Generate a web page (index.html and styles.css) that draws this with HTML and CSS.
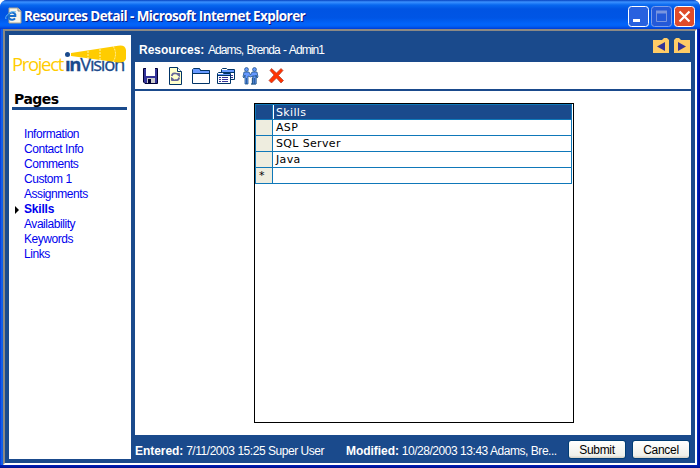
FILE: index.html
```html
<!DOCTYPE html>
<html lang="en">
<head>
<meta charset="utf-8">
<title>Resources Detail</title>
<link rel="stylesheet" href="styles.css">
</head>
<body>
<div class="window">
  <header class="titlebar">
    <svg class="page-icon" width="17" height="17" viewBox="0 0 17 17"><path d="M4 1h9l3 3v12H4z" fill="#f7f5ea" stroke="#aaa58f"/><path d="M13 1v3h3" fill="#ddd" stroke="#888"/><path d="M10 11.3A3.6 3.6 0 1 1 10.3 7.500L10.300 9H4" fill="none" stroke="#176dcc" stroke-width="2"/><path d="M1 12C-1 9 7 3 11 5" fill="none" stroke="#60b8f4"/></svg>
    <h1>Resources Detail - Microsoft Internet Explorer</h1>
    <div class="controls">
      <svg class="ctl" width="21" height="21" viewBox="0 0 21 21"><rect x=".5" y=".5" width="20" height="20" rx="3" fill="#2861df" stroke="#fff"/><rect x="5" y="13" width="7" height="3" fill="#fff"/></svg>
      <svg class="ctl" width="21" height="21" viewBox="0 0 21 21"><rect x=".5" y=".5" width="20" height="20" rx="3" fill="#2459d8" stroke="#7e9fe9"/><path d="M5.500 6v9.500h10V6" fill="none" stroke="#7995df"/><path d="M5 6h11" stroke="#7995df" stroke-width="3"/></svg>
      <svg class="ctl" width="21" height="21" viewBox="0 0 21 21"><rect x=".5" y=".5" width="20" height="20" rx="3" fill="#df4c29" stroke="#fff"/><path d="M5.500 5.500l10 10m0-10l-10 10" stroke="#fff" stroke-width="2.200"/></svg>
    </div>
  </header>
  <div class="frame">
    <aside class="sidebar">
      <div class="logo">
        <svg class="beam" width="117" height="20" viewBox="0 0 117 20">
          <path d="M59 8L106 .8Q113 -.5 114 5V14Q112 19 103 17L59 11z" fill="#fc0"/>
          <path d="M76 6v7M88 4v11M101 1q5 8 0 16" fill="none" stroke="#fff3b0" stroke-dasharray="2 1"/>
          <circle cx="55.500" cy="9.500" r="2.500" fill="#1a4a8c"/>
        </svg>
        <div class="wordmark"><span class="project">Project</span><span class="in"><b>ın</b>Vısıon</span></div>
      </div>
      <h2>Pages</h2>
      <nav>
        <a>Information</a>
        <a>Contact Info</a>
        <a>Comments</a>
        <a>Custom 1</a>
        <a>Assignments</a>
        <a class="current">Skills</a>
        <a>Availability</a>
        <a>Keywords</a>
        <a>Links</a>
      </nav>
    </aside>
    <main>
      <div class="record">
        <b>Resources:</b><span class="name">Adams, Brenda - Admin1</span>
        <div class="pager">
          <svg width="16" height="15" viewBox="0 0 16 15"><path d="M0 2h9l2-2h3l2 2v13H0z" fill="#fc6"/><path d="M12 4v9L4 8.500z" fill="#339"/></svg>
          <svg width="16" height="15" viewBox="0 0 16 15"><path d="M0 2l2-2h3l2 2h9v13H0z" fill="#fc6"/><path d="M4 4v9l8-4.500z" fill="#339"/></svg>
        </div>
      </div>
      <div class="toolbar">
        <svg width="18" height="18" viewBox="0 0 18 18"><path d="M1.500 1.500h14v15H3l-1.500-1.500z" fill="#339" stroke="#003"/><path d="M4 1h9v8H4z" fill="#fff"/><path d="M5 11h8v5H5z" fill="#ccc"/><path d="M6 12h3v4H6z" fill="#003"/></svg>
        <svg width="18" height="18" viewBox="0 0 18 18"><path d="M2.500.5h8l4 4v13h-12z" fill="#ffffcc" stroke="#036"/><path d="M10.500.5v4h4" fill="#fff" stroke="#036"/><path d="M4.800 9q.5-3.500 4.500-2.500M12.200 10.500q-.5 3.500-4.500 2.500" fill="none" stroke="#669" stroke-width="1.800"/><path d="M9 6.500h3.500V9.500zM8 13.500H4.500v-3z" fill="#669" stroke="#669"/></svg>
        <svg width="18" height="18" viewBox="0 0 18 18"><path d="M.5 16.500V2.500l1-1h6l1 2h9v13z" fill="#fff" stroke="#036"/><path d="M1 4h16v2H1zM1 2h7v2H1z" fill="#69f"/><path d="M1 6.500h16M7.500 1.500l1 2h9" fill="none" stroke="#036"/></svg>
        <svg width="18" height="18" viewBox="0 0 18 18"><path d="M4.500 12V2.500l1-1h4l1 1h7v10h-4" fill="#fff" stroke="#036"/><path d="M5 3h12v2H5z" fill="#69f"/><path d="M5 5.500h12" stroke="#036"/><path d="M.5 16.500v-10l1-1h4l1 1h7v10z" fill="#fff" stroke="#036"/><path d="M1 7h12v1H1z" fill="#69f"/><path d="M1 8.500h12" stroke="#036"/><path d="M2 10.500h2m1 0h6M2 12.500h2m1 0h6M2 14.500h2m1 0h6M14 8.500h2M14 10.500h2" stroke="#339"/></svg>
        <svg width="18" height="18" viewBox="0 0 18 18"><g fill="#69f" stroke="#258" stroke-width=".8"><circle cx="4.500" cy="2.500" r="1.900"/><circle cx="12.500" cy="2.500" r="1.900"/><path d="M2 5h5l1.500 3L10 5h5l1 5-1 1-1-3v9h-5 1.700v-6h-.4v6H11V9l-2.500 1L6 9v8H3V8l-1 3-1-1z"/><path d="M11 9h3v8h-3z"/><path d="M4.500 11v6M12.500 11v6"/></g></svg>
        <svg width="18" height="18" viewBox="0 0 18 18"><path d="M4.500 1.500L9.500 6 14 1.500l2 2-4.500 5 5 5-2.500 2.500-4.500-5-5 5L2 13.500l5-5.500L3 3.500z" fill="#f30" stroke="#a43" stroke-width=".7"/></svg>
      </div>
      <div class="canvas">
        <div class="gridbox">
          <table>
            <tr class="head"><th></th><th>Skills</th></tr>
            <tr><th></th><td>ASP</td></tr>
            <tr><th></th><td>SQL Server</td></tr>
            <tr><th></th><td>Java</td></tr>
            <tr><th>*</th><td></td></tr>
          </table>
        </div>
      </div>
      <footer>
        <div class="entered"><b>Entered:</b> <span>7/11/2003 15:25 Super User</span></div>
        <div class="modified"><b>Modified:</b> <span>10/28/2003 13:43 Adams, Bre...</span></div>
        <button>Submit</button>
        <button>Cancel</button>
      </footer>
    </main>
  </div>
</div>
</body>
</html>
```
FILE: styles.css
```css
* { box-sizing: border-box; }
body { margin: 0; background: #fff; font-family: "Liberation Sans", Arial, sans-serif; font-size: 12px; overflow: hidden; }
.window { width: 700px; height: 468px; display: flex; flex-direction: column; padding: 0 3px 3px; border-radius: 7px 7px 0 0; background: linear-gradient(#0000, #0000 465px, #0020b8 465px, #00108c), linear-gradient(90deg, #0831d9, #166aee 2px, #0855dd 3px, #0030c8 697px, #00109c 699px); }
.titlebar { height: 29px; flex: none; margin: 0 -3px; padding: 0 5px; display: flex; align-items: center; border-radius: 7px 7px 0 0; background: linear-gradient(#0542c0 0, #3b91ff 2px, #0868ef 5px, #0054e3 9px, #0055e5 18px, #0264fb 24px, #0261f5 26px, #003dd7 29px); }
.page-icon { margin-top: 2px; }
h1 { margin: 3px 0 0 2px; font: bold 13.5px "Open Sans", sans-serif; letter-spacing: -.58px; color: #fff; text-shadow: 1px 1px #0a1883; white-space: nowrap; }
.controls { display: flex; gap: 2px; margin: 3px 0 0 auto; }
.frame { flex: 1; display: flex; min-height: 0; background: #1a4a8c; border: solid; border-width: 2px; border-color: #8c8984 #fff #fff #8c8984; padding: 4px 4px 0 4px; }
.sidebar { width: 122px; height: 424px; background: #fff; padding-left: 3px; }
.logo { position: relative; height: 46px; margin-top: 10px; }
.beam { position: absolute; left: 0; top: 0; }
.wordmark { padding-top: 6px; font: 18.500px/26px "Open Sans", sans-serif; white-space: nowrap; }
.project { display: inline-block; width: 53px; letter-spacing: -1.35px; color: #fc0; }
.in { letter-spacing: -1.3px; color: #1a4a8c; -webkit-text-stroke: .3px #1a4a8c; }
h2 { width: 115px; height: 19px; margin: 0; padding: 0 2px; border-bottom: 3px solid #1a4a8c; font: bold 14px/17px "DejaVu Sans", sans-serif; letter-spacing: -.5px; color: #000; }
nav { display: flex; flex-direction: column; margin: 17px 0 0 12px; }
nav a { height: 15px; line-height: 15px; color: #00e; letter-spacing: -.45px; white-space: nowrap; }
nav .current { font-weight: bold; letter-spacing: -.2px; display: flex; align-items: center; margin-left: -9px; }
.current::before { content: ""; border: solid transparent; border-width: 4px 0 4px 4px; border-left-color: #000; margin-right: 5px; }
main { flex: 1; margin-left: 4px; margin-top: -4px; min-width: 0; }
.record { height: 31px; display: flex; align-items: center; color: #fff; padding: 6px 1px 0 4px; }
.record b { width: 69px; }
.name { letter-spacing: -.95px; word-spacing: 1px; }
.record .name { letter-spacing: -.93px; }
.pager { margin: -8px 0 0 auto; display: flex; gap: 5px; }
.toolbar { height: 29px; background: #fff; border-bottom: 2px solid #1a4a8c; display: flex; gap: 7px; padding: 5px 0 0 7px; }
.canvas { height: 344px; background: #fff; padding: 12px 0 0 119px; }
.gridbox { width: 320px; height: 320px; border: 1px solid #000; }
table { width: 317px; border-collapse: collapse; table-layout: fixed; font: 11px/13px "DejaVu Sans", sans-serif; letter-spacing: .35px; }
th, td { height: 16px; padding: 0 3px; text-align: left; border: 1px solid #0f78b9; white-space: nowrap; }
.head th { height: 15px; }
th:first-child { width: 17px; background: #eeeddf; font-weight: normal; }
.head th, .head th:first-child { background: #1a4a8c; color: #fff; font-weight: normal; }
.head th:last-child { box-shadow: inset 1px 0 #fff; }
footer { height: 31px; display: flex; align-items: center; color: #fff; white-space: nowrap; letter-spacing: -.46px; }
.entered { flex: none; width: 211px; }
.modified { flex: none; width: 222px; }
footer b { letter-spacing: -.05px; }
footer button { flex: none; width: 58px; height: 19px; padding: 0; margin: -2px 6px 0 0; border: 1px solid #003c74; border-radius: 3px; background: linear-gradient(#fff, #f0f0ea 85%, #d6d0c5); font: 12px "Liberation Sans", sans-serif; letter-spacing: -.3px; }
```
